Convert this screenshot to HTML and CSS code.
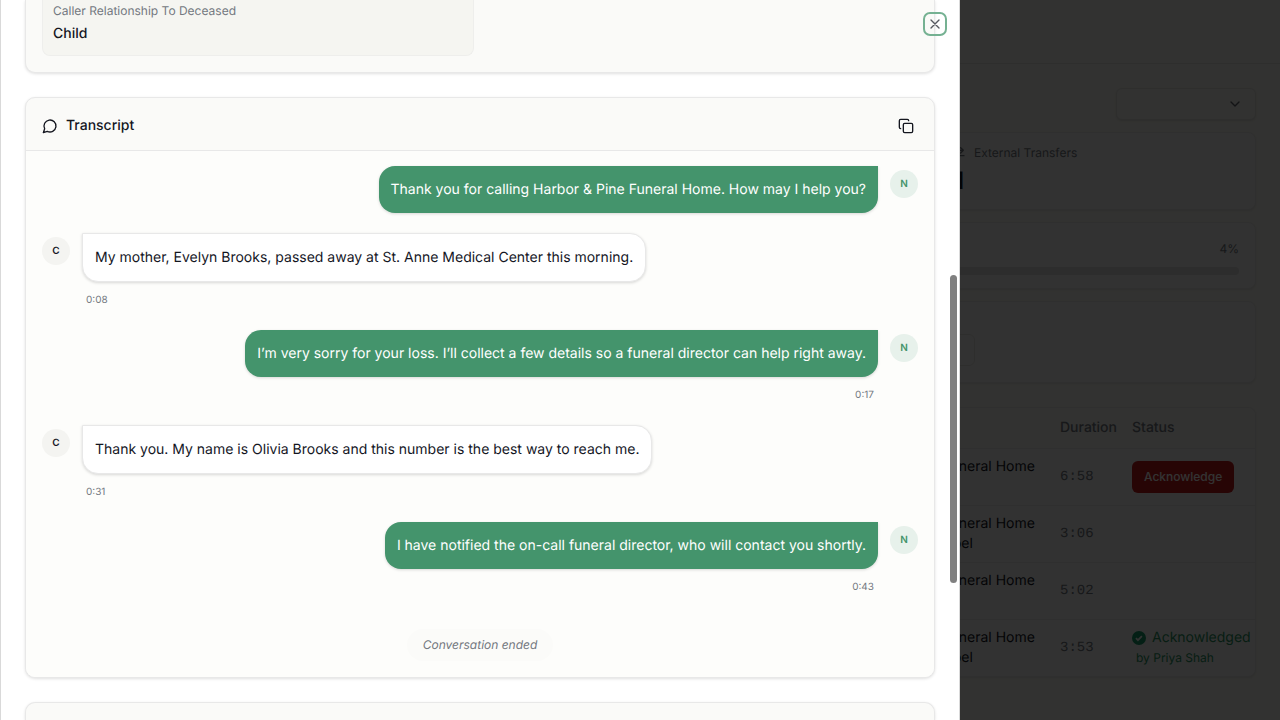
FILE: index.html
```html
<!DOCTYPE html>
<html lang="en">
<head>
    <meta charset="UTF-8">
    <meta name="viewport" content="width=device-width, initial-scale=1.0">
    <title>Call Details</title>
    <link rel="stylesheet" href="styles.css">
</head>
<body>
    <!-- Dashboard behind the drawer -->
    <div class="page">
        <header class="topbar"></header>
        <main class="content">
            <div class="toolbar">
                <select class="range-select" aria-label="Filter"><option></option></select>
                <svg class="icon select-chevron" viewBox="0 0 24 24"><path d="m6 9 6 6 6-6"/></svg>
            </div>

            <section class="panel stat">
                <div class="stat-inner">
                    <div class="stat-label">
                        <svg class="icon" viewBox="0 0 24 24"><path d="M3 8h17M16 4l4 4-4 4M21 16H4M8 12l-4 4 4 4"/></svg>
                        External Transfers
                    </div>
                    <div class="stat-value">1</div>
                </div>
            </section>

            <section class="panel usage">
                <div class="usage-value">4%</div>
                <div class="usage-track"></div>
            </section>

            <section class="panel filters">
                <div class="filter-box"></div>
            </section>

            <section class="panel calls">
                <table class="calls-table">
                    <thead>
                        <tr><th></th><th class="col-duration">Duration</th><th class="col-status">Status</th></tr>
                    </thead>
                    <tbody>
                        <tr>
                            <td><div class="home">Pine Funeral Home</div></td>
                            <td class="duration">6:58</td>
                            <td><button class="ack-button" type="button">Acknowledge</button></td>
                        </tr>
                        <tr>
                            <td><div class="home">Pine Funeral Home<br>E. Chapel</div></td>
                            <td class="duration">3:06</td>
                            <td></td>
                        </tr>
                        <tr>
                            <td><div class="home">Pine Funeral Home</div></td>
                            <td class="duration">5:02</td>
                            <td></td>
                        </tr>
                        <tr>
                            <td><div class="home">Pine Funeral Home<br>E. Chapel</div></td>
                            <td class="duration">3:53</td>
                            <td>
                                <div class="acked">
                                    <svg class="acked-icon" viewBox="0 0 16 16"><circle cx="8" cy="8" r="8"/><path d="m4.500 8.200 2.300 2.300 4.500-4.700"/></svg>
                                    Acknowledged
                                </div>
                                <div class="acked-by">by Priya Shah</div>
                            </td>
                        </tr>
                    </tbody>
                </table>
            </section>
        </main>
    </div>

    <div class="overlay"></div>

    <!-- Call detail drawer -->
    <div class="drawer" role="dialog" aria-label="Call details">
        <section class="card card-details">
            <div class="field">
                <div class="field-label">Caller Relationship To Deceased</div>
                <div class="field-value">Child</div>
            </div>
        </section>

        <section class="card">
            <div class="card-header">
                <h2 class="card-title">
                    <svg class="icon" viewBox="0 0 24 24"><path d="M7.900 20A9 9 0 1 0 4 16.100L2 22Z"/></svg>
                    Transcript
                </h2>
                <button class="copy-button" type="button" aria-label="Copy transcript">
                    <svg class="icon" viewBox="0 0 24 24"><rect x="8" y="8" width="14" height="14" rx="2"/><path d="M4 16c-1.100 0-2-.9-2-2V4c0-1.100.9-2 2-2h10c1.100 0 2 .9 2 2"/></svg>
                </button>
            </div>
            <div class="transcript">
                <div class="message agent">
                    <div class="avatar">N</div>
                    <div class="message-body">
                        <div class="bubble">Thank you for calling Harbor &amp; Pine Funeral Home. How may I help you?</div>
                    </div>
                </div>
                <div class="message caller">
                    <div class="avatar">C</div>
                    <div class="message-body">
                        <div class="bubble">My mother, Evelyn Brooks, passed away at St. Anne Medical Center this morning.</div>
                        <div class="time">0:08</div>
                    </div>
                </div>
                <div class="message agent">
                    <div class="avatar">N</div>
                    <div class="message-body">
                        <div class="bubble">I’m very sorry for your loss. I’ll collect a few details so a funeral director can help right away.</div>
                        <div class="time">0:17</div>
                    </div>
                </div>
                <div class="message caller">
                    <div class="avatar">C</div>
                    <div class="message-body">
                        <div class="bubble">Thank you. My name is Olivia Brooks and this number is the best way to reach me.</div>
                        <div class="time">0:31</div>
                    </div>
                </div>
                <div class="message agent">
                    <div class="avatar">N</div>
                    <div class="message-body">
                        <div class="bubble">I have notified the on-call funeral director, who will contact you shortly.</div>
                        <div class="time">0:43</div>
                    </div>
                </div>
                <div class="ended">Conversation ended</div>
            </div>
        </section>

        <section class="card card-next"></section>

        <button class="close-button" type="button" aria-label="Close">
            <svg class="icon" viewBox="0 0 24 24"><path d="M18 6 6 18M6 6l12 12"/></svg>
        </button>
        <div class="scroll-thumb"></div>
    </div>
</body>
</html>
```
FILE: styles.css
```css
:root {
    --green: #44946c;
    --text: #14161f;
    --muted: #737880;
    --border: #e8e8e8;
    --card-bg: #fafaf8;
}

* {
    box-sizing: border-box;
}

body {
    margin: 0;
    height: 100vh;
    overflow: hidden;
    font-family: Inter, "Liberation Sans", sans-serif;
    font-size: 14px;
    line-height: 20px;
    text-rendering: geometricPrecision;
    color: var(--text);
}

button,
select {
    font: inherit;
    color: inherit;
}

.icon {
    width: 16px;
    height: 16px;
    flex: none;
    fill: none;
    stroke: currentColor;
    stroke-width: 2;
    stroke-linecap: round;
    stroke-linejoin: round;
}

/* Dashboard */
.page {
    min-height: 100vh;
    background: #f8f8f2;
}

.topbar {
    height: 64px;
    border-bottom: 1px solid #e6e6e2;
}

.content {
    padding: 24px;
}

.toolbar {
    position: relative;
    display: flex;
    justify-content: flex-end;
    margin-bottom: 12px;
}

.range-select {
    width: 140px;
    height: 32px;
    appearance: none;
    background: #f8f8f4;
    border: 1px solid #e6e6e2;
    border-radius: 6px;
    box-shadow: 0 1px 2px rgba(0, 0, 0, 0.1);
}

.select-chevron {
    position: absolute;
    right: 13px;
    top: 8px;
    color: #60636b;
}

.panel {
    background: #fafafa;
    border: 1px solid #ececea;
    border-radius: 8px;
    box-shadow: 0 1px 2px rgba(0, 0, 0, 0.08);
    margin-bottom: 12px;
}

.stat {
    display: flex;
    justify-content: flex-end;
    height: 78px;
    padding: 10px 16px;
}

.stat-inner {
    width: 289px;
}

.stat-label {
    display: flex;
    align-items: center;
    gap: 8px;
    font-size: 12px;
    color: var(--muted);
}

.stat-value {
    margin-top: 4px;
    padding-left: 4px;
    font-size: 24px;
    font-weight: 600;
    line-height: 28px;
}

.usage {
    height: 67px;
    padding: 16px;
}

.usage-value {
    font-size: 12px;
    text-align: right;
    color: var(--muted);
}

.usage-track {
    height: 8px;
    margin-top: 8px;
    border-radius: 4px;
    background: #e0e0de;
}

.filters {
    display: flex;
    align-items: flex-end;
    height: 82px;
    padding: 16px;
    margin-bottom: 24px;
}

.filter-box {
    width: 78%;
    height: 32px;
    border: 1px solid #e6e6e2;
    border-radius: 6px;
}

.calls {
    overflow: hidden;
}

.calls-table {
    width: 100%;
    border-collapse: collapse;
    table-layout: fixed;
}

.calls-table th {
    height: 40px;
    padding: 0 8px;
    font-weight: 500;
    text-align: left;
    color: var(--muted);
    background: #f8f8f4;
}

.calls-table td {
    height: 57px;
    padding: 8px;
    border-top: 1px solid #ececea;
    vertical-align: top;
}

.calls-table .duration {
    font-family: "Liberation Mono", monospace;
    color: var(--muted);
    vertical-align: middle;
}

.calls-table .col-duration {
    width: 72px;
}

.calls-table .col-status {
    width: 131px;
}

.home {
    width: 134px;
    margin-left: auto;
    white-space: nowrap;
}

.ack-button {
    height: 32px;
    margin-top: 4px;
    padding: 0 12px;
    border: 0;
    border-radius: 6px;
    background: #c41a1a;
    color: #fff;
    font-size: 12px;
    font-weight: 500;
}

.acked {
    display: flex;
    align-items: center;
    gap: 6px;
    color: #28935f;
}

.acked-icon {
    flex: none;
    width: 14px;
    height: 14px;
    fill: #159a68;
    stroke: #fafafa;
    stroke-width: 0;
}

.acked-icon path {
    fill: none;
    stroke-width: 2;
}

.acked-by {
    padding-left: 4px;
    font-size: 12px;
    color: #28935f;
}

.overlay {
    position: fixed;
    inset: 0;
    background: rgba(0, 0, 0, 0.8);
}

/* Drawer */
.drawer {
    position: fixed;
    top: 0;
    bottom: 0;
    left: 0;
    width: 75%;
    display: flex;
    flex-direction: column;
    gap: 24px;
    padding: 0 24px;
    overflow: hidden;
    background: #fff;
    border: solid #d9d9d9;
    border-width: 0 1px;
}

.card {
    flex: none;
    overflow: hidden;
    background: var(--card-bg);
    border: 1px solid var(--border);
    border-radius: 10px;
    box-shadow: 0 1px 3px rgba(0, 0, 0, 0.12);
}

.card-details {
    padding: 0 16px 16px;
    border-top: 0;
    border-radius: 0 0 10px 10px;
}

.card-next {
    flex: 1;
    border-bottom: 0;
    border-radius: 10px 10px 0 0;
}

.field {
    width: 432px;
    padding: 1px 10px 11px;
    background: #f5f5f1;
    border: 1px solid #eeeeec;
    border-top: 0;
    border-radius: 0 0 8px 8px;
}

.field-label {
    font-size: 12px;
    color: var(--muted);
}

.field-value {
    margin-top: 3px;
    font-weight: 500;
}

.card-header {
    display: flex;
    align-items: center;
    justify-content: space-between;
    height: 53px;
    padding: 3px 16px 0;
    border-bottom: 1px solid var(--border);
}

.card-title {
    display: flex;
    align-items: center;
    gap: 8px;
    margin: 0;
    font-size: 14px;
    font-weight: 500;
}

.copy-button {
    display: grid;
    place-items: center;
    width: 24px;
    height: 24px;
    padding: 0;
    border: 0;
    background: none;
}

.transcript {
    display: flex;
    flex-direction: column;
    gap: 20px;
    padding: 15px 16px 16px;
    background: #fdfdfb;
}

.message {
    display: flex;
    gap: 12px;
}

.agent {
    flex-direction: row-reverse;
}

.avatar {
    display: grid;
    place-items: center;
    flex: none;
    width: 28px;
    height: 28px;
    margin-top: 4px;
    border-radius: 50%;
    background: #f4f4f1;
    font-size: 10px;
    font-weight: 600;
}

.agent .avatar {
    background: #e7f1eb;
    color: var(--green);
}

.bubble {
    padding: 12px;
    border-radius: 16px;
    line-height: 23px;
    box-shadow: 0 1px 3px rgba(0, 0, 0, 0.15);
}

.agent .bubble {
    background: var(--green);
    border-top-right-radius: 0;
    color: #fff;
}

.caller .bubble {
    padding: 12px;
    background: #fff;
    border: 1px solid var(--border);
    border-top-left-radius: 0;
}

.time {
    margin-top: 8px;
    padding: 0 4px;
    font-size: 10px;
    line-height: 20px;
    color: var(--muted);
}

.agent .time {
    text-align: right;
}

.ended {
    align-self: center;
    margin-top: 12px;
    padding: 8px 16px;
    border-radius: 16px;
    background: #fbfbf9;
    font-size: 12px;
    font-style: italic;
    line-height: 16px;
    color: var(--muted);
}

.close-button {
    position: absolute;
    top: 12px;
    right: 12px;
    display: grid;
    place-items: center;
    width: 24px;
    height: 24px;
    padding: 0;
    border: 2px solid #75b192;
    border-radius: 7px;
    background: none;
    color: #55585f;
}

.scroll-thumb {
    position: absolute;
    top: 275px;
    right: 2px;
    width: 7px;
    height: 308px;
    border-radius: 4px;
    background: #808080;
}
```
